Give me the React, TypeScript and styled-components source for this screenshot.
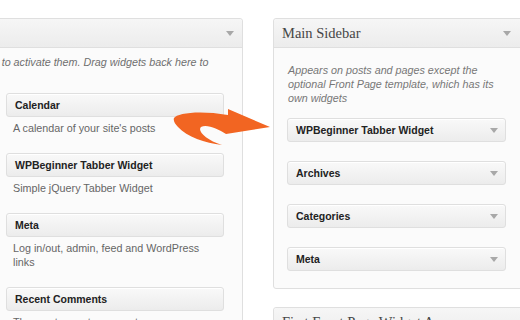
import React from 'react'
import styled, { createGlobalStyle } from 'styled-components'

const GlobalStyle = createGlobalStyle`
    body {
        margin: 0;
        background: #fff;
        overflow: hidden;
        font-family: "Liberation Sans", Arial, sans-serif;
    }
`

const Page = styled.div`
    position: relative;
    display: flex;
    align-items: flex-start;
    gap: 30px;
    height: 320px;
    padding-top: 18px;
    box-sizing: border-box;
    overflow: hidden;
`

const Panel = styled.div<{ width: number }>`
    flex-shrink: 0;
    width: ${({ width }) => width}px;
    box-sizing: border-box;
    background: #fbfbfb;
    border: 1px solid #dfdfdf;
    border-radius: 3px;
`

const AvailablePanel = styled(Panel)`
    margin-left: -240px;
`

const PanelHeader = styled.div<{ arrowRight: number }>`
    display: flex;
    align-items: center;
    justify-content: space-between;
    height: 28px;
    padding: 0 ${({ arrowRight }) => arrowRight}px 0 8px;
    background: linear-gradient(#f6f6f6, #ececec);
    border-bottom: 1px solid #dfdfdf;
    border-radius: 3px 3px 0 0;
`

const PanelTitle = styled.span`
    font-family: "Liberation Serif", "Times New Roman", serif;
    font-size: 14.5px;
    color: #464646;
    white-space: nowrap;
`

const Caret = styled.span`
    width: 0;
    height: 0;
    border-left: 4px solid transparent;
    border-right: 4px solid transparent;
    border-top: 5px solid #a8a8a8;
`

const Intro = styled.p`
    margin: 0;
    padding: 7px 15px 10px 10px;
    font-size: 10.75px;
    line-height: 14px;
    font-style: italic;
    color: #6f6f6f;
`

const SidebarIntro = styled(Intro)`
    padding: 15px 19px 0 14px;
    color: #777;
`

const WidgetGrid = styled.div`
    display: grid;
    grid-template-columns: 218px 218px;
    column-gap: 12px;
    align-items: start;
    padding: 0 18px 0 15px;
`

const WidgetList = styled.div`
    display: flex;
    flex-direction: column;
    gap: 19px;
    padding: 13px 19px 17px 13px;
`

const WidgetBar = styled.div`
    display: flex;
    align-items: center;
    justify-content: space-between;
    height: 24px;
    box-sizing: border-box;
    padding: 0 7px 0 8px;
    background: linear-gradient(#f9f9f9, #ececec);
    border: 1px solid #dfdfdf;
    border-radius: 3px;
    box-shadow: inset 0 1px 0 #fff;
    font-size: 10.5px;
    font-weight: bold;
    color: #222;
    white-space: nowrap;
`

const WidgetDesc = styled.p`
    margin: 4px 0 18px;
    padding: 0 12px 0 7px;
    font-size: 10.75px;
    line-height: 14px;
    color: #666;
`

const SideColumn = styled.div`
    display: flex;
    flex-direction: column;
    gap: 18px;
    flex-shrink: 0;
`

const ArrowOverlay = styled.svg`
    position: absolute;
    left: 170px;
    top: 105px;
    width: 104px;
    height: 45px;
`

type Widget = { title: string, desc: string }

const available: Widget[] = [
    { title: 'Archives', desc: "A monthly archive of your site's posts" },
    { title: 'Calendar', desc: "A calendar of your site's posts" },
    { title: 'Categories', desc: 'A list or dropdown of categories' },
    { title: 'WPBeginner Tabber Widget', desc: 'Simple jQuery Tabber Widget' },
    { title: 'Custom Menu', desc: 'Use this widget to add one of your custom menus.' },
    { title: 'Meta', desc: 'Log in/out, admin, feed and WordPress links' },
    { title: 'Pages', desc: "Your site's WordPress Pages" },
    { title: 'Recent Comments', desc: 'The most recent comments' },
]

const sidebarWidgets = ['WPBeginner Tabber Widget', 'Archives', 'Categories', 'Meta']

const App = () => {
    return (
        <>
            <GlobalStyle />
            <Page>
                <AvailablePanel width={483}>
                    <PanelHeader arrowRight={8}>
                        <PanelTitle>Available Widgets</PanelTitle>
                        <Caret />
                    </PanelHeader>
                    <Intro>
                        Drag widgets from here to a sidebar on the right to activate them. Drag widgets back here to deactivate them and delete their settings.
                    </Intro>
                    <WidgetGrid>
                        {available.map(w => (
                            <div key={w.title}>
                                <WidgetBar>{w.title}</WidgetBar>
                                <WidgetDesc>{w.desc}</WidgetDesc>
                            </div>
                        ))}
                    </WidgetGrid>
                </AvailablePanel>
                <SideColumn>
                    <Panel width={253}>
                        <PanelHeader arrowRight={14}>
                            <PanelTitle>Main Sidebar</PanelTitle>
                            <Caret />
                        </PanelHeader>
                        <SidebarIntro>
                            Appears on posts and pages except the optional Front Page template, which has its own widgets
                        </SidebarIntro>
                        <WidgetList>
                            {sidebarWidgets.map(title => (
                                <WidgetBar key={title}>
                                    {title}
                                    <Caret />
                                </WidgetBar>
                            ))}
                        </WidgetList>
                    </Panel>
                    <Panel width={253}>
                        <PanelHeader arrowRight={14}>
                            <PanelTitle>First Front Page Widget Area</PanelTitle>
                            <Caret />
                        </PanelHeader>
                    </Panel>
                </SideColumn>
                <ArrowOverlay viewBox="0 0 104 45">
                    <path
                        d="M4,13 C7,8 30,5 58,10 L58,4 L100,22 L56,29 C48,24 37,19 31,22 C27,26 36,35 52,40 C35,38 17,32 8,22 C5,19 3,16 4,13 Z"
                        fill="#f26522"
                    />
                </ArrowOverlay>
            </Page>
        </>
    )
}

export default App
